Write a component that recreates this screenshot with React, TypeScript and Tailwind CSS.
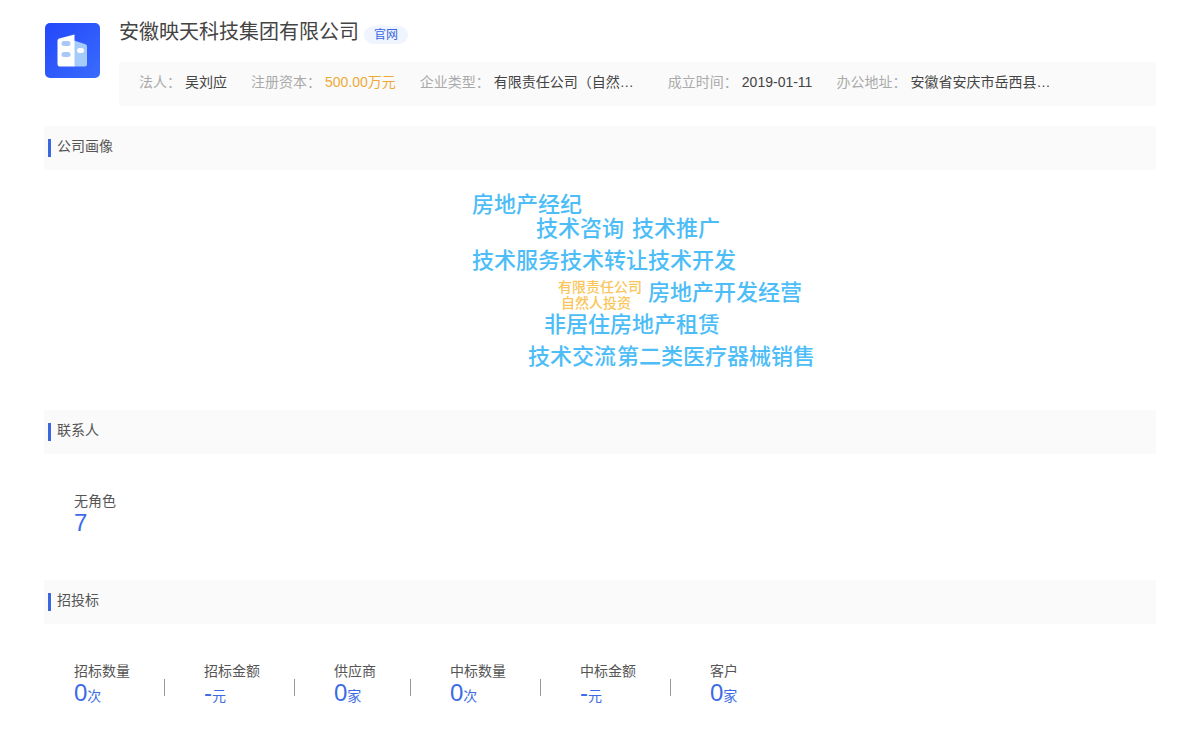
import type { ReactNode } from "react";

const facts = [
  { label: "法人", value: "吴刘应" },
  { label: "注册资本", value: "500.00万元", highlight: true },
  { label: "企业类型", value: "有限责任公司（自然…", wide: true },
  { label: "成立时间", value: "2019-01-11" },
  { label: "办公地址", value: "安徽省安庆市岳西县…", wide: true },
];

const words = [
  { text: "房地产经纪", place: "left-[12px] top-[23px]" },
  { text: "技术咨询", place: "left-[76px] top-[47px]" },
  { text: "技术推广", place: "left-[172px] top-[47px]" },
  { text: "技术服务", place: "left-[12px] top-[79px]" },
  { text: "技术转让", place: "left-[100px] top-[79px]" },
  { text: "技术开发", place: "left-[188px] top-[79px]" },
  { text: "有限责任公司", place: "left-[98px] top-[109px]", small: true },
  { text: "自然人投资", place: "left-[101px] top-[125px]", small: true },
  { text: "房地产开发经营", place: "left-[188px] top-[111px]" },
  { text: "非居住房地产租赁", place: "left-[84px] top-[143px]" },
  { text: "技术交流", place: "left-[68px] top-[175px]" },
  { text: "第二类医疗器械销售", place: "left-[157px] top-[175px]" },
];

const contacts = [{ label: "无角色", value: "7", unit: "" }];

const bids = [
  { label: "招标数量", value: "0", unit: "次" },
  { label: "招标金额", value: "-", unit: "元" },
  { label: "供应商", value: "0", unit: "家" },
  { label: "中标数量", value: "0", unit: "次" },
  { label: "中标金额", value: "-", unit: "元" },
  { label: "客户", value: "0", unit: "家" },
];

const CompanyLogo = () => (
  <svg viewBox="0 0 56 56" className="h-14 w-14 shrink-0" aria-hidden="true">
    <defs>
      <linearGradient id="logo-bg" x1="0" y1="0" x2="1" y2="1">
        <stop offset="0" stopColor="#2347fb" />
        <stop offset="1" stopColor="#3a6cfd" />
      </linearGradient>
    </defs>
    <rect x="1" y="1" width="55" height="55" rx="5" fill="url(#logo-bg)" />
    <path d="M30 18.5l11.5 3.700q1.500.5 1.500 2V42q0 2.500-2.500 2.500H30z" fill="#a5cbfa" />
    <path d="M15.200 16.500q-1.700.5-1.700 2.200V42q0 2.500 2.500 2.500h14.500V12.500z" fill="#fff" />
    <rect x="17.500" y="19" width="9" height="5" rx="2.500" fill="#a9c8f8" />
    <rect x="17.500" y="30" width="9" height="5" rx="2.500" fill="#a9c8f8" />
    <rect x="33" y="26" width="7" height="5" rx="2.500" fill="#fff" />
  </svg>
);

const Section = ({ title, children }: { title: string; children: ReactNode }) => (
  <section>
    <div className="flex h-11 items-center bg-[#fafafa] pl-1">
      <span className="h-[18px] w-[3px] bg-[#3a66e0]" />
      <h2 className="pb-1 pl-1.5 text-sm text-[#555]">{title}</h2>
    </div>
    {children}
  </section>
);

const Stats = ({ items }: { items: { label: string; value: string; unit: string }[] }) => (
  <dl className="flex flex-wrap px-[30px] pt-[37px] pb-[42px]">
    {items.map((item, i) => (
      <div key={item.label} className="flex items-center">
        {i > 0 && <span className="mt-1.5 mr-[39px] ml-[34px] h-[17px] w-px bg-[#999]" />}
        <div>
          <dt className="text-sm leading-5 text-[#555]">{item.label}</dt>
          <dd className="text-sm leading-6 text-[#3d6be5]">
            <span className="text-2xl leading-6">{item.value}</span>
            {item.unit}
          </dd>
        </div>
      </div>
    ))}
  </dl>
);

const App = () => {
  return (
    <main className="min-h-screen bg-white px-11 pt-[18px] font-['Liberation_Sans','Noto_Sans_CJK_SC',sans-serif]">
      <header className="mb-5 flex gap-[19px]">
        <div className="pt-1">
          <CompanyLogo />
        </div>
        <div className="min-w-0 flex-1">
          <div className="flex h-11 items-start">
            <h1 className="text-xl leading-7 text-[#444]">安徽映天科技集团有限公司</h1>
            <a
              href="#"
              className="mt-2 ml-[5px] rounded-full bg-[#eff4fe] px-2.5 text-xs leading-[18px] text-[#3a66e0]"
            >
              官网
            </a>
          </div>
          <dl className="flex min-h-11 flex-wrap items-center gap-x-6 bg-[#fafafa] px-5 pb-1 text-sm">
            {facts.map((fact) => (
              <div key={fact.label} className="flex gap-1">
                <dt className="text-[#aaa]">{fact.label}：</dt>
                <dd
                  className={
                    fact.highlight ? "text-[#efa938]" : fact.wide ? "w-[150px] text-[#444]" : "text-[#444]"
                  }
                >
                  {fact.value}
                </dd>
              </div>
            ))}
          </dl>
        </div>
      </header>

      <Section title="公司画像">
        <div className="flex h-60 justify-center">
          <div className="relative w-[280px]">
            {words.map((word) => (
              <span
                key={word.text}
                className={`absolute whitespace-nowrap ${word.place} ${
                  word.small
                    ? "text-sm leading-4 font-medium text-[#f9c65a]"
                    : "text-[22px] leading-6 font-medium text-[#4dbdf7]"
                }`}
              >
                {word.text}
              </span>
            ))}
          </div>
        </div>
      </Section>

      <Section title="联系人">
        <Stats items={contacts} />
      </Section>

      <Section title="招投标">
        <Stats items={bids} />
      </Section>
    </main>
  );
};

export default App;
